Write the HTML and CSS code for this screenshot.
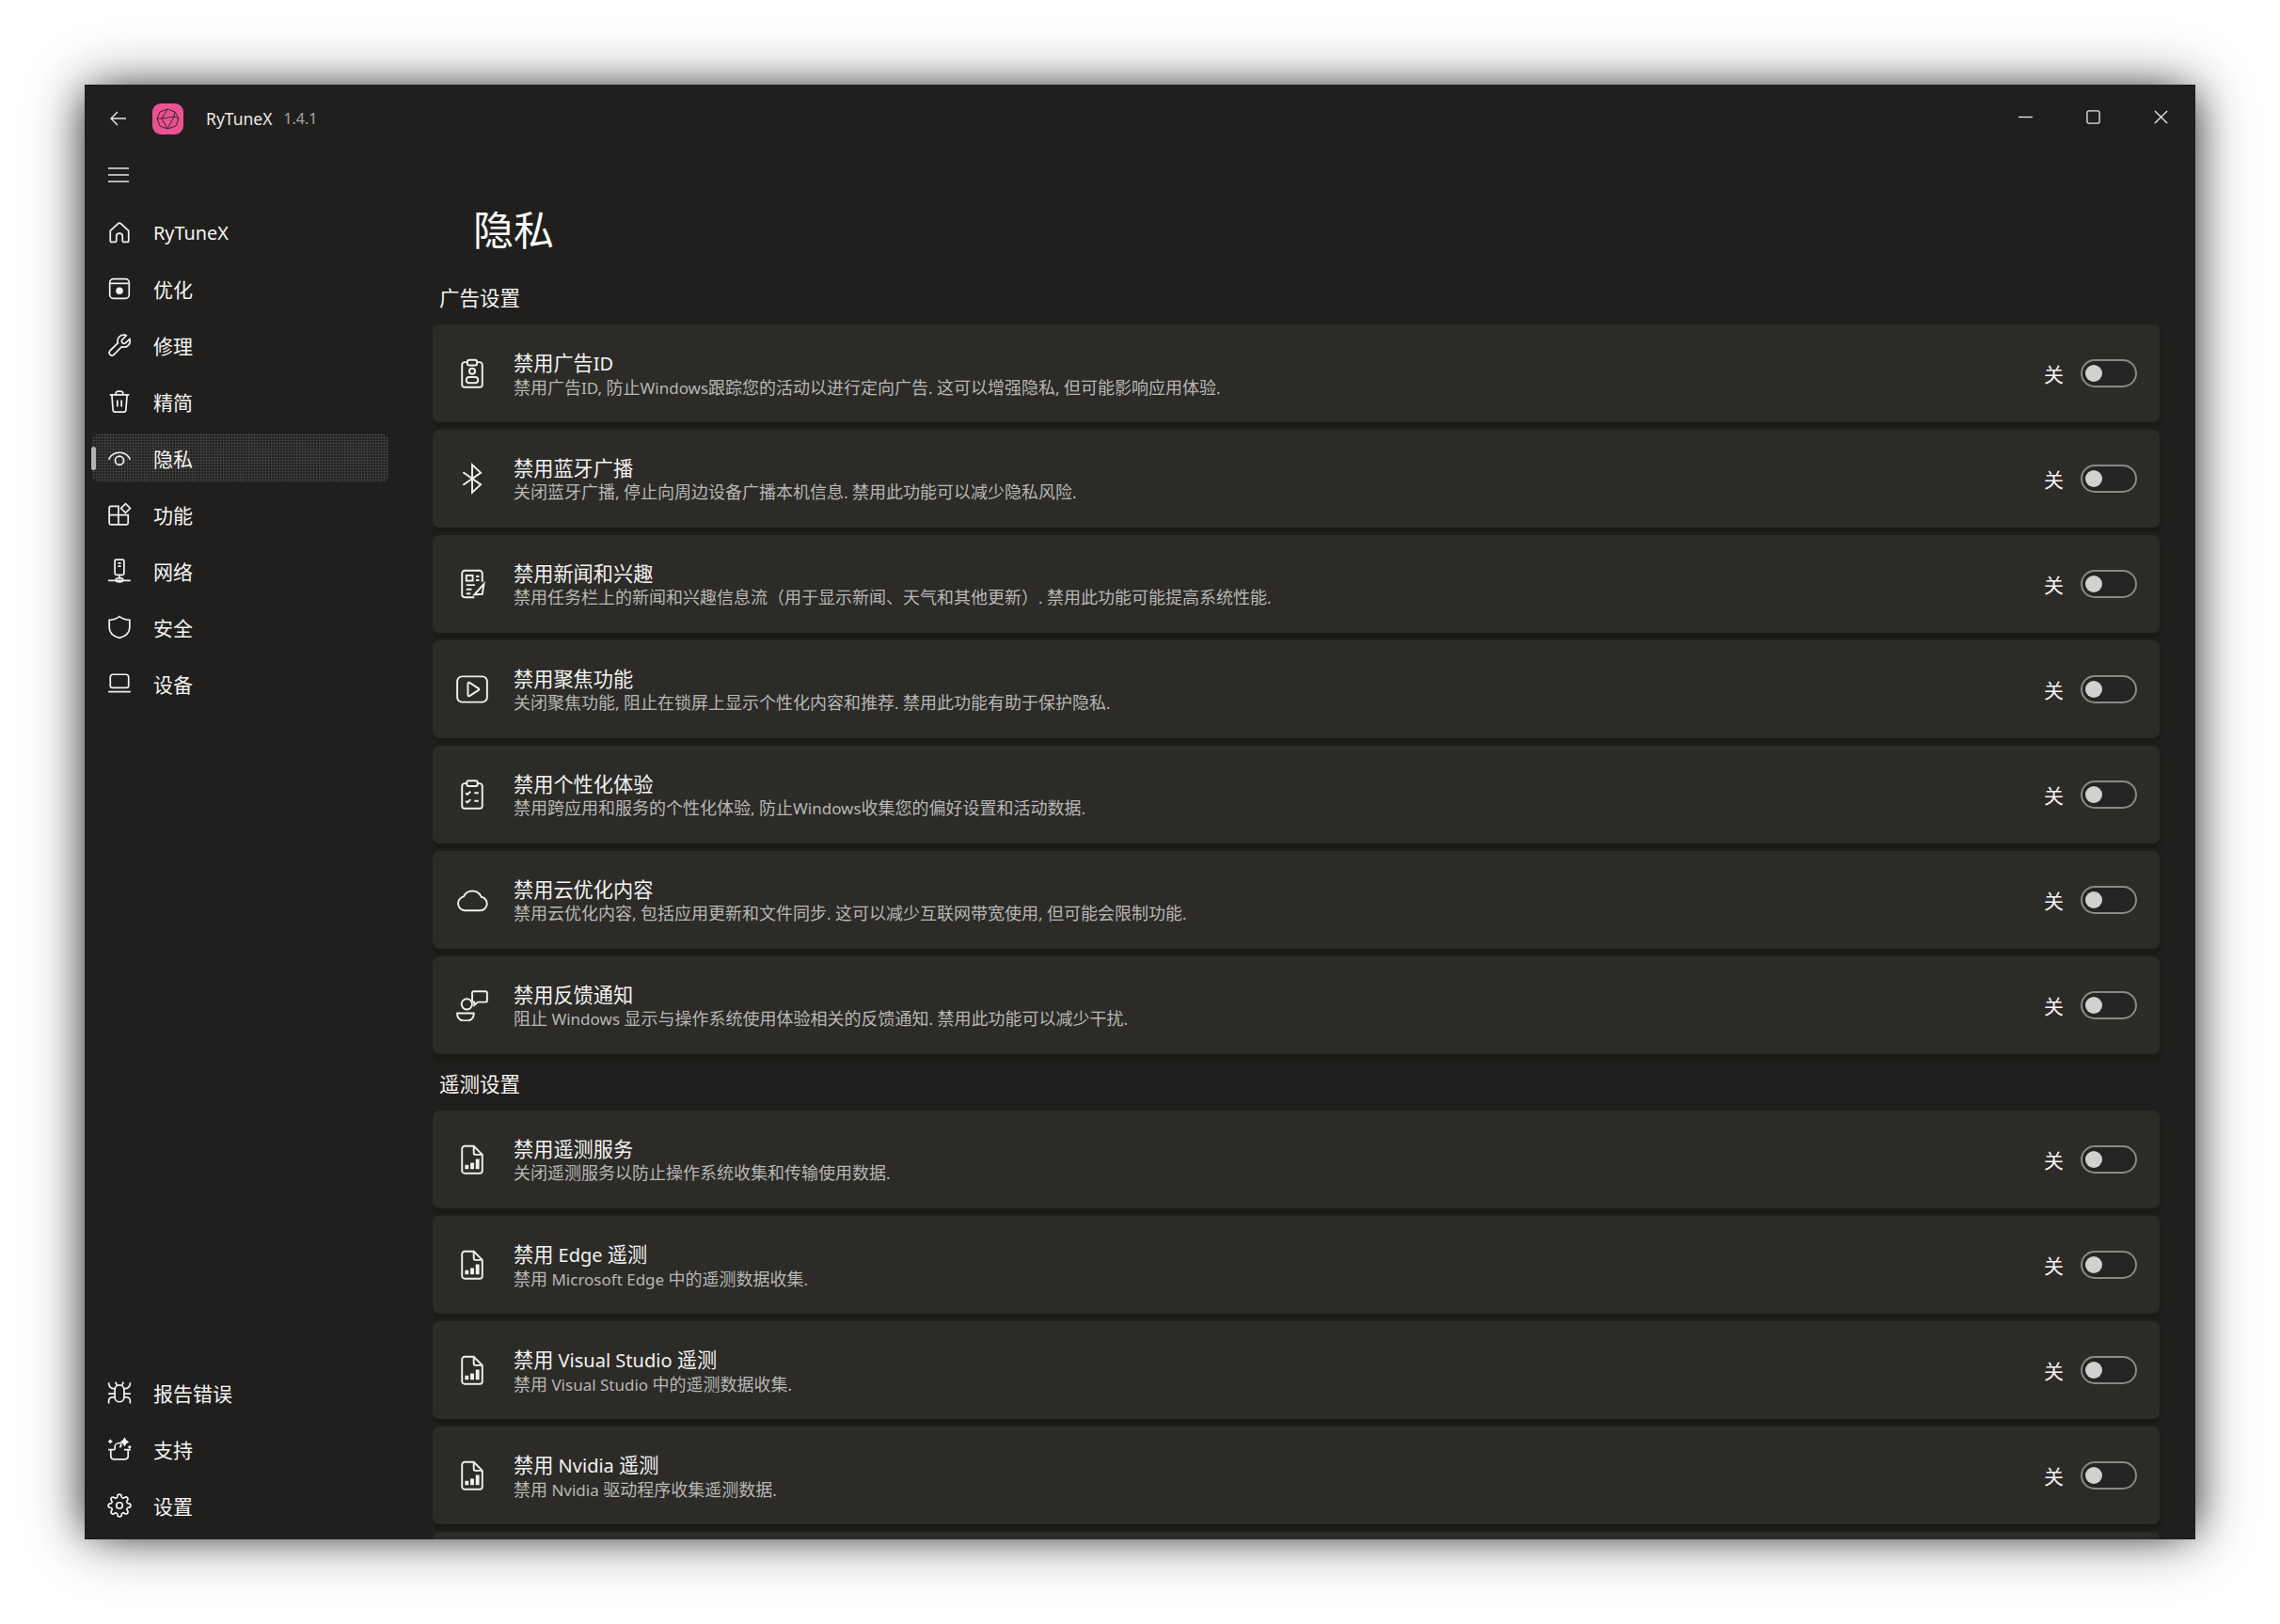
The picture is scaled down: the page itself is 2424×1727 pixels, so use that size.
FILE: index.html
```html
<!DOCTYPE html>
<html lang="zh-CN">
<head>
<meta charset="utf-8">
<title>RyTuneX</title>
<link rel="stylesheet" href="styles.css">
</head>
<body>
<svg class="defs" xmlns="http://www.w3.org/2000/svg">
  <symbol id="i-home" viewBox="0 0 24 24"><path d="M3 10.600 10.600 3.600a2 2 0 0 1 2.800 0L21 10.600V20a1.600 1.600 0 0 1-1.600 1.600h-3.200A1.200 1.200 0 0 1 15 20.400V16a3 3 0 0 0-6 0v4.400a1.200 1.200 0 0 1-1.200 1.200H4.600A1.600 1.600 0 0 1 3 20z"/></symbol>
  <symbol id="i-opt" viewBox="0 0 24 24"><rect x="2.500" y="2.500" width="19" height="19" rx="3.500"/><path d="M3 6.800h18"/><circle class="solid" cx="12" cy="14" r="3.500"/></symbol>
  <symbol id="i-wrench" viewBox="0 0 24 24"><path d="M16.500 1.900a6 6 0 0 0-6 8L2.600 17.700a2.700 2.700 0 0 0 3.800 3.800l7.800-7.900a6 6 0 0 0 7.800-7.600l-3.900 3.900a2 2 0 0 1-2.900 0l-.4-.4a2 2 0 0 1 0-2.900l3.900-3.900a6 6 0 0 0-1.300-.8z"/></symbol>
  <symbol id="i-trash" viewBox="0 0 24 24"><path d="M2.500 5.500h19M8.500 5.500V4a2.500 2.500 0 0 1 2.500-2h2a2.500 2.500 0 0 1 2.500 2v1.500M4.500 5.500l1.200 15a2 2 0 0 0 2 1.800h8.600a2 2 0 0 0 2-1.800l1.200-15M10 10.500v6.500M14 10.500v6.500"/></symbol>
  <symbol id="i-eye" viewBox="0 0 24 24"><path d="M1.500 13.500a11.500 11.500 0 0 1 21 0"/><circle cx="12" cy="14.500" r="4.200"/></symbol>
  <symbol id="i-apps" viewBox="0 0 24 24"><path d="M2 5.500a1.500 1.500 0 0 1 1.500-1.500H11v8.500H2zM2 12.500h9V22H3.500A1.500 1.500 0 0 1 2 20.500zM11 12.500h9.500v8a1.500 1.500 0 0 1-1.500 1.500h-8zM18 1.500 22.500 6 18 10.500 13.500 6z"/></symbol>
  <symbol id="i-net" viewBox="0 0 24 24"><rect x="7.500" y="1" width="9" height="15" rx="1.500"/><path d="M10.500 4.500h3M10.500 7.500h3M12 16v4M1 21.500h22"/><ellipse cx="12" cy="21" rx="3.500" ry="2"/></symbol>
  <symbol id="i-shield" viewBox="0 0 24 24"><path d="M12 1.500c3 2.400 6 3.300 10 3.500v7c0 5.200-3.400 8.800-10 10.500C5.400 20.800 2 17.200 2 12V5c4-.2 7-1.100 10-3.500z"/></symbol>
  <symbol id="i-laptop" viewBox="0 0 24 24"><path d="M3 5.500A2.500 2.500 0 0 1 5.500 3h13A2.500 2.500 0 0 1 21 5.500V14a2 2 0 0 1-2 2H5a2 2 0 0 1-2-2zM1 20h22"/></symbol>
  <symbol id="i-bug" viewBox="0 0 24 24"><path d="M7.500 9a4.500 4.500 0 0 1 9 0v7.500a4.500 4.500 0 0 1-9 0zM1.500 2v1a5 5 0 0 0 5 5h1M22.500 2v1a5 5 0 0 1-5 5h-1M9.500 4.500 8 1.500M14.500 4.500 16 1.500M1 13h6.500M16.500 13H23M1.500 22.500v-2.500a3.500 3.500 0 0 1 3.500-3.500h2.500M22.500 22.500v-2.500a3.500 3.500 0 0 0-3.500-3.500h-2.500"/></symbol>
  <symbol id="i-sup" viewBox="0 0 24 24"><path d="M3.500 12.500V19a3 3 0 0 0 3 3h11a3 3 0 0 0 3-3v-6.500M1 12.500h6.500M16.500 12.500H23M7.500 12.500V10a4 4 0 0 1 4-4c2.500 0 3 3.500.5 4"/><path class="solid" d="M17 .5l1.800 2.700 2.700 1.800-2.700 1.800L17 9.500l-1.800-2.700L12.500 5l2.700-1.800zM3 2l1 1.500 1.500 1-1.500 1L3 7 2 5.500.5 4.500l1.500-1zM22 8l.8 1.200 1.200.8-1.200.8L22 12l-.8-1.200L20 10l1.200-.8z"/></symbol>
  <symbol id="i-gear" viewBox="0 0 24 24"><circle cx="12" cy="12" r="3"/><path d="M19.400 15a1.650 1.650 0 0 0 .33 1.820l.06.06a2 2 0 0 1 0 2.830 2 2 0 0 1-2.830 0l-.06-.06a1.650 1.650 0 0 0-1.820-.33 1.650 1.650 0 0 0-1 1.510V21a2 2 0 0 1-2 2 2 2 0 0 1-2-2v-.09A1.650 1.650 0 0 0 9 19.400a1.650 1.650 0 0 0-1.820.33l-.06.06a2 2 0 0 1-2.830 0 2 2 0 0 1 0-2.830l.06-.06a1.650 1.650 0 0 0 .33-1.820 1.650 1.650 0 0 0-1.510-1H3a2 2 0 0 1-2-2 2 2 0 0 1 2-2h.09A1.650 1.650 0 0 0 4.600 9a1.650 1.650 0 0 0-.33-1.820l-.06-.06a2 2 0 0 1 0-2.830 2 2 0 0 1 2.830 0l.06.06a1.650 1.650 0 0 0 1.820.33H9a1.650 1.650 0 0 0 1-1.510V3a2 2 0 0 1 2-2 2 2 0 0 1 2 2v.09a1.650 1.650 0 0 0 1 1.510 1.650 1.650 0 0 0 1.820-.33l.06-.06a2 2 0 0 1 2.830 0 2 2 0 0 1 0 2.830l-.06.06a1.650 1.650 0 0 0-.33 1.820V9a1.650 1.650 0 0 0 1.510 1H21a2 2 0 0 1 2 2 2 2 0 0 1-2 2h-.09a1.650 1.650 0 0 0-1.510 1z"/></symbol>
  <symbol id="c-id" viewBox="0 0 30 30"><path d="M10.500 4.500H8a2.500 2.500 0 0 0-2.500 2.500v18.500A2.500 2.500 0 0 0 8 28h14a2.500 2.500 0 0 0 2.500-2.500V7A2.500 2.500 0 0 0 22 4.500h-2.500"/><path d="M10.500 6.500V4.500a2 2 0 0 1 2-2h5a2 2 0 0 1 2 2v2a1 1 0 0 1-1 1h-7a1 1 0 0 1-1-1z"/><circle cx="15" cy="13" r="2.700"/><rect x="9.500" y="18.500" width="11" height="5.500" rx="2.700"/></symbol>
  <symbol id="c-bt" viewBox="0 0 30 30"><path d="M6.500 9 23 20.500 15 28V2l8 7.500L6.500 21"/></symbol>
  <symbol id="c-news" viewBox="0 0 30 30"><path d="M24.500 13V5a2.500 2.500 0 0 0-2.500-2.500H8A2.500 2.500 0 0 0 5.500 5v20A2.500 2.500 0 0 0 8 27.500h9"/><rect x="9.500" y="7" width="6" height="5"/><path d="M18.500 8h3M18.500 11.500h3M9.500 16h8M9.500 20h5M9.500 24h4M17 25l9-10-1.500 9.500z"/></symbol>
  <symbol id="c-play" viewBox="0 0 30 30"><rect x="1" y="3" width="28" height="24" rx="4.500"/><path d="M11 9.500a1 1 0 0 1 1.500-.8l8.500 5.500a1 1 0 0 1 0 1.600l-8.500 5.500a1 1 0 0 1-1.500-.8z"/></symbol>
  <symbol id="c-check" viewBox="0 0 30 30"><path d="M10 4.500H8A2.500 2.500 0 0 0 5.500 7v18.500A2.500 2.500 0 0 0 8 28h14a2.500 2.500 0 0 0 2.500-2.500V7A2.500 2.500 0 0 0 22 4.500h-2"/><rect x="10" y="2" width="10" height="5" rx="1.500"/><path d="M9 13.500l1.500 1.500 3-3M17 13.500h4M9 21l1.500 1.500 3-3M17 21h4"/></symbol>
  <symbol id="c-cloud" viewBox="0 0 30 30"><path d="M8 25h14.500a6.500 6.500 0 0 0 1-12.900A9 9 0 0 0 7 11.800 6.700 6.700 0 0 0 8 25z"/></symbol>
  <symbol id="c-fb" viewBox="0 0 30 30"><circle cx="10" cy="14" r="5"/><path d="M1 22.500h15.500v1A6 6 0 0 1 10.500 29.500h-3.500a6 6 0 0 1-6-6zM15 3.500a1.500 1.500 0 0 1 1.500-1.500H27.500A1.500 1.500 0 0 1 29 3.500v7a1.500 1.500 0 0 1-1.500 1.500H20.500l-3.500 3V12A2 2 0 0 1 15 10.500z"/></symbol>
  <symbol id="c-doc" viewBox="0 0 30 30"><path d="M8 2.500h8.500L24.500 10.500V25.500A2.500 2.500 0 0 1 22 28H8A2.500 2.500 0 0 1 5.500 25.500V5A2.500 2.500 0 0 1 8 2.500zM16.500 3v5.500a2 2 0 0 0 2 2H24"/><path class="thick" d="M10 20v4M15 18v6M20 14.500V24"/></symbol>
</svg>

<div class="window">
  <header class="titlebar">
    <span class="tb-back"><svg class="glyph" viewBox="0 0 20 20"><path d="M18 10H2M9 3l-7 7 7 7"/></svg></span>
    <span class="logo"><svg viewBox="0 0 33 33"><path d="M16 6 24 9 28 16 25 24 16 27 8 24 5 16 8 9zM16 6 10 16 16 27M5 16H10M10 16 23 14 24 9M23 14 28 16M23 14 16 27"/></svg></span>
    <span class="app-name">RyTuneX</span>
    <span class="app-ver">1.4.1</span>
    <span class="win-btns">
      <svg class="glyph" viewBox="0 0 16 16"><path d="M0 8h16"/></svg>
      <svg class="glyph" viewBox="0 0 16 16"><rect x="1" y="1" width="14" height="14" rx="2"/></svg>
      <svg class="glyph" viewBox="0 0 16 16"><path d="M1 1l14 14M15 1 1 15"/></svg>
    </span>
  </header>
  <div class="body">
    <nav class="sidebar">
      <div class="hamb"><svg class="glyph" viewBox="0 0 22 18"><path d="M0 2h22M0 9h22M0 16h22"/></svg></div>
      <a class="nav"><svg class="ico"><use href="#i-home"/></svg><span class="lat">RyTuneX</span></a>
      <a class="nav"><svg class="ico"><use href="#i-opt"/></svg><span>优化</span></a>
      <a class="nav"><svg class="ico"><use href="#i-wrench"/></svg><span>修理</span></a>
      <a class="nav"><svg class="ico"><use href="#i-trash"/></svg><span>精简</span></a>
      <a class="nav active"><svg class="ico"><use href="#i-eye"/></svg><span>隐私</span></a>
      <a class="nav"><svg class="ico"><use href="#i-apps"/></svg><span>功能</span></a>
      <a class="nav"><svg class="ico"><use href="#i-net"/></svg><span>网络</span></a>
      <a class="nav"><svg class="ico"><use href="#i-shield"/></svg><span>安全</span></a>
      <a class="nav"><svg class="ico"><use href="#i-laptop"/></svg><span>设备</span></a>
      <div class="spacer"></div>
      <a class="nav"><svg class="ico"><use href="#i-bug"/></svg><span>报告错误</span></a>
      <a class="nav"><svg class="ico"><use href="#i-sup"/></svg><span>支持</span></a>
      <a class="nav"><svg class="ico"><use href="#i-gear"/></svg><span>设置</span></a>
    </nav>
    <main class="main">
      <h1 class="page-title">隐私</h1>
      <h2 class="section">广告设置</h2>
      <div class="cards">
        <section class="card"><svg class="cico"><use href="#c-id"/></svg><div class="txt"><div class="t">禁用广告<span class="lat">ID</span></div><div class="d">禁用广告<span class="lat">ID, </span>防止<span class="lat">Windows</span>跟踪您的活动以进行定向广告<span class="lat">. </span>这可以增强隐私<span class="lat">, </span>但可能影响应用体验<span class="lat">.</span></div></div><span class="state">关</span><span class="toggle"></span></section>
        <section class="card"><svg class="cico"><use href="#c-bt"/></svg><div class="txt"><div class="t">禁用蓝牙广播</div><div class="d">关闭蓝牙广播<span class="lat">, </span>停止向周边设备广播本机信息<span class="lat">. </span>禁用此功能可以减少隐私风险<span class="lat">.</span></div></div><span class="state">关</span><span class="toggle"></span></section>
        <section class="card"><svg class="cico"><use href="#c-news"/></svg><div class="txt"><div class="t">禁用新闻和兴趣</div><div class="d">禁用任务栏上的新闻和兴趣信息流（用于显示新闻、天气和其他更新）<span class="lat">. </span>禁用此功能可能提高系统性能<span class="lat">.</span></div></div><span class="state">关</span><span class="toggle"></span></section>
        <section class="card"><svg class="cico"><use href="#c-play"/></svg><div class="txt"><div class="t">禁用聚焦功能</div><div class="d">关闭聚焦功能<span class="lat">, </span>阻止在锁屏上显示个性化内容和推荐<span class="lat">. </span>禁用此功能有助于保护隐私<span class="lat">.</span></div></div><span class="state">关</span><span class="toggle"></span></section>
        <section class="card"><svg class="cico"><use href="#c-check"/></svg><div class="txt"><div class="t">禁用个性化体验</div><div class="d">禁用跨应用和服务的个性化体验<span class="lat">, </span>防止<span class="lat">Windows</span>收集您的偏好设置和活动数据<span class="lat">.</span></div></div><span class="state">关</span><span class="toggle"></span></section>
        <section class="card"><svg class="cico"><use href="#c-cloud"/></svg><div class="txt"><div class="t">禁用云优化内容</div><div class="d">禁用云优化内容<span class="lat">, </span>包括应用更新和文件同步<span class="lat">. </span>这可以减少互联网带宽使用<span class="lat">, </span>但可能会限制功能<span class="lat">.</span></div></div><span class="state">关</span><span class="toggle"></span></section>
        <section class="card"><svg class="cico"><use href="#c-fb"/></svg><div class="txt"><div class="t">禁用反馈通知</div><div class="d">阻止<span class="lat"> Windows </span>显示与操作系统使用体验相关的反馈通知<span class="lat">. </span>禁用此功能可以减少干扰<span class="lat">.</span></div></div><span class="state">关</span><span class="toggle"></span></section>
      </div>
      <h2 class="section second">遥测设置</h2>
      <div class="cards">
        <section class="card"><svg class="cico"><use href="#c-doc"/></svg><div class="txt"><div class="t">禁用遥测服务</div><div class="d">关闭遥测服务以防止操作系统收集和传输使用数据<span class="lat">.</span></div></div><span class="state">关</span><span class="toggle"></span></section>
        <section class="card"><svg class="cico"><use href="#c-doc"/></svg><div class="txt"><div class="t">禁用<span class="lat"> Edge </span>遥测</div><div class="d">禁用<span class="lat"> Microsoft Edge </span>中的遥测数据收集<span class="lat">.</span></div></div><span class="state">关</span><span class="toggle"></span></section>
        <section class="card"><svg class="cico"><use href="#c-doc"/></svg><div class="txt"><div class="t">禁用<span class="lat"> Visual Studio </span>遥测</div><div class="d">禁用<span class="lat"> Visual Studio </span>中的遥测数据收集<span class="lat">.</span></div></div><span class="state">关</span><span class="toggle"></span></section>
        <section class="card"><svg class="cico"><use href="#c-doc"/></svg><div class="txt"><div class="t">禁用<span class="lat"> Nvidia </span>遥测</div><div class="d">禁用<span class="lat"> Nvidia </span>驱动程序收集遥测数据<span class="lat">.</span></div></div><span class="state">关</span><span class="toggle"></span></section>
        <section class="card"></section>
      </div>
    </main>
  </div>
</div>
</body>
</html>
```

FILE: styles.css
```css
* { box-sizing: border-box; }
html, body { height: 100%; }
body {
  margin: 0;
  background: #fff;
  padding: 90px;
  font-family: "Noto Sans", "Noto Sans CJK SC", sans-serif;
  color: #f5f5f4;
  overflow: hidden;
}
.defs { display: none; }
.solid { fill: currentColor; stroke: none; }
.thick { stroke-width: 3.4; }
.lat { font-size: 0.945em; }

.window {
  width: 2244px;
  height: 1547px;
  background: #201f1d;
  display: flex;
  flex-direction: column;
  overflow: hidden;
  box-shadow:
    0 0 56px 2px rgba(0,0,0,.42),
    -14px 0 38px -14px rgba(0,0,0,.5),
    14px 0 38px -14px rgba(0,0,0,.5);
}

.titlebar {
  height: 72px;
  flex: none;
  display: flex;
  align-items: center;
  padding-left: 26px;
}
.glyph { fill: none; stroke: #e9e9e8; stroke-width: 1.4; display: block; }
.tb-back .glyph { width: 20px; height: 20px; }
.tb-back { margin-right: 26px; }
.logo { width: 33px; height: 33px; border-radius: 9px; background: #ea5290; margin-right: 24px; flex: none; }
.logo svg { display: block; width: 33px; height: 33px; fill: none; stroke: #3a2430; stroke-width: 1; }
.app-name { font-size: 17.500px; color: #e8e8e7; margin-right: 12px; }
.app-ver { font-size: 16px; color: #a5a5a3; }
.win-btns { margin-left: auto; display: flex; align-items: center; gap: 57px; padding-right: 29px; margin-top: -3px; }
.win-btns .glyph { width: 15px; height: 15px; }

.body { flex: 1; display: flex; min-height: 0; }

.sidebar {
  width: 370px;
  flex: none;
  display: flex;
  flex-direction: column;
  padding: 0 0 6px 8px;
}
.hamb { height: 48px; margin-bottom: 7px; display: flex; align-items: center; padding-left: 17px; }
.hamb .glyph { width: 22px; height: 18px; }
.spacer { flex: 1; }
.nav {
  height: 60px;
  flex: none;
  display: flex;
  align-items: center;
  padding-left: 16px;
  gap: 23px;
  font-size: 21px;
  width: 315px;
  position: relative;
  color: #f5f5f4;
}
.ico { width: 26px; height: 26px; fill: none; stroke: #f0f0ef; stroke-width: 1.6; flex: none; }
.nav.active {
  background-color: #222120;
  background-image: radial-gradient(circle at 1.500px 1.500px, #454443 0.9px, transparent 1.200px);
  background-size: 3px 3px;
  border-radius: 8px;
  height: 52px;
  margin: 4px 0;
}
.nav.active::before {
  content: "";
  position: absolute;
  left: -1px;
  top: 14px;
  width: 5px;
  height: 25px;
  border-radius: 3px;
  background: #b2b2b0;
}

.main { flex: 1; min-width: 0; overflow: hidden; padding-right: 38px; }
.page-title { margin: 54px 0 0 43px; font-size: 43px; line-height: 58px; font-weight: 400; color: #fafafa; height: 58px; }
.section { margin: 29px 0 14px 7px; font-size: 21.500px; line-height: 28px; font-weight: 400; color: #f5f5f4; }
.section.second { margin-top: 18px; margin-bottom: 14px; }
.cards { display: flex; flex-direction: column; gap: 8px; }
.card {
  height: 104px;
  flex: none;
  background: #2c2b28;
  border-radius: 7px;
  display: flex;
  align-items: center;
  padding: 0 16px 0 25px;
  box-shadow: 0 5px 4px rgba(24,23,21,.7);
}
.cico { width: 34px; height: 34px; fill: none; stroke: #f0f0ef; stroke-width: 1.700; flex: none; }
.txt { flex: 1; min-width: 0; margin-left: 27px; align-self: flex-start; padding-top: 28px; }
.t { font-size: 21.200px; line-height: 26px; color: #f2f2f1; }
.d { font-size: 18px; line-height: 25px; color: #b8b7b5; }
.state { font-size: 21px; color: #f5f5f4; margin-right: 18px; }
.toggle {
  width: 60px;
  height: 30px;
  border: 2px solid #8a8987;
  border-radius: 15px;
  background: #252422;
  flex: none;
  margin-right: 8px;
  position: relative;
}
.toggle::after {
  content: "";
  position: absolute;
  left: 3px;
  top: 4px;
  width: 18px;
  height: 18px;
  border-radius: 50%;
  background: #d2d1cf;
}
```
